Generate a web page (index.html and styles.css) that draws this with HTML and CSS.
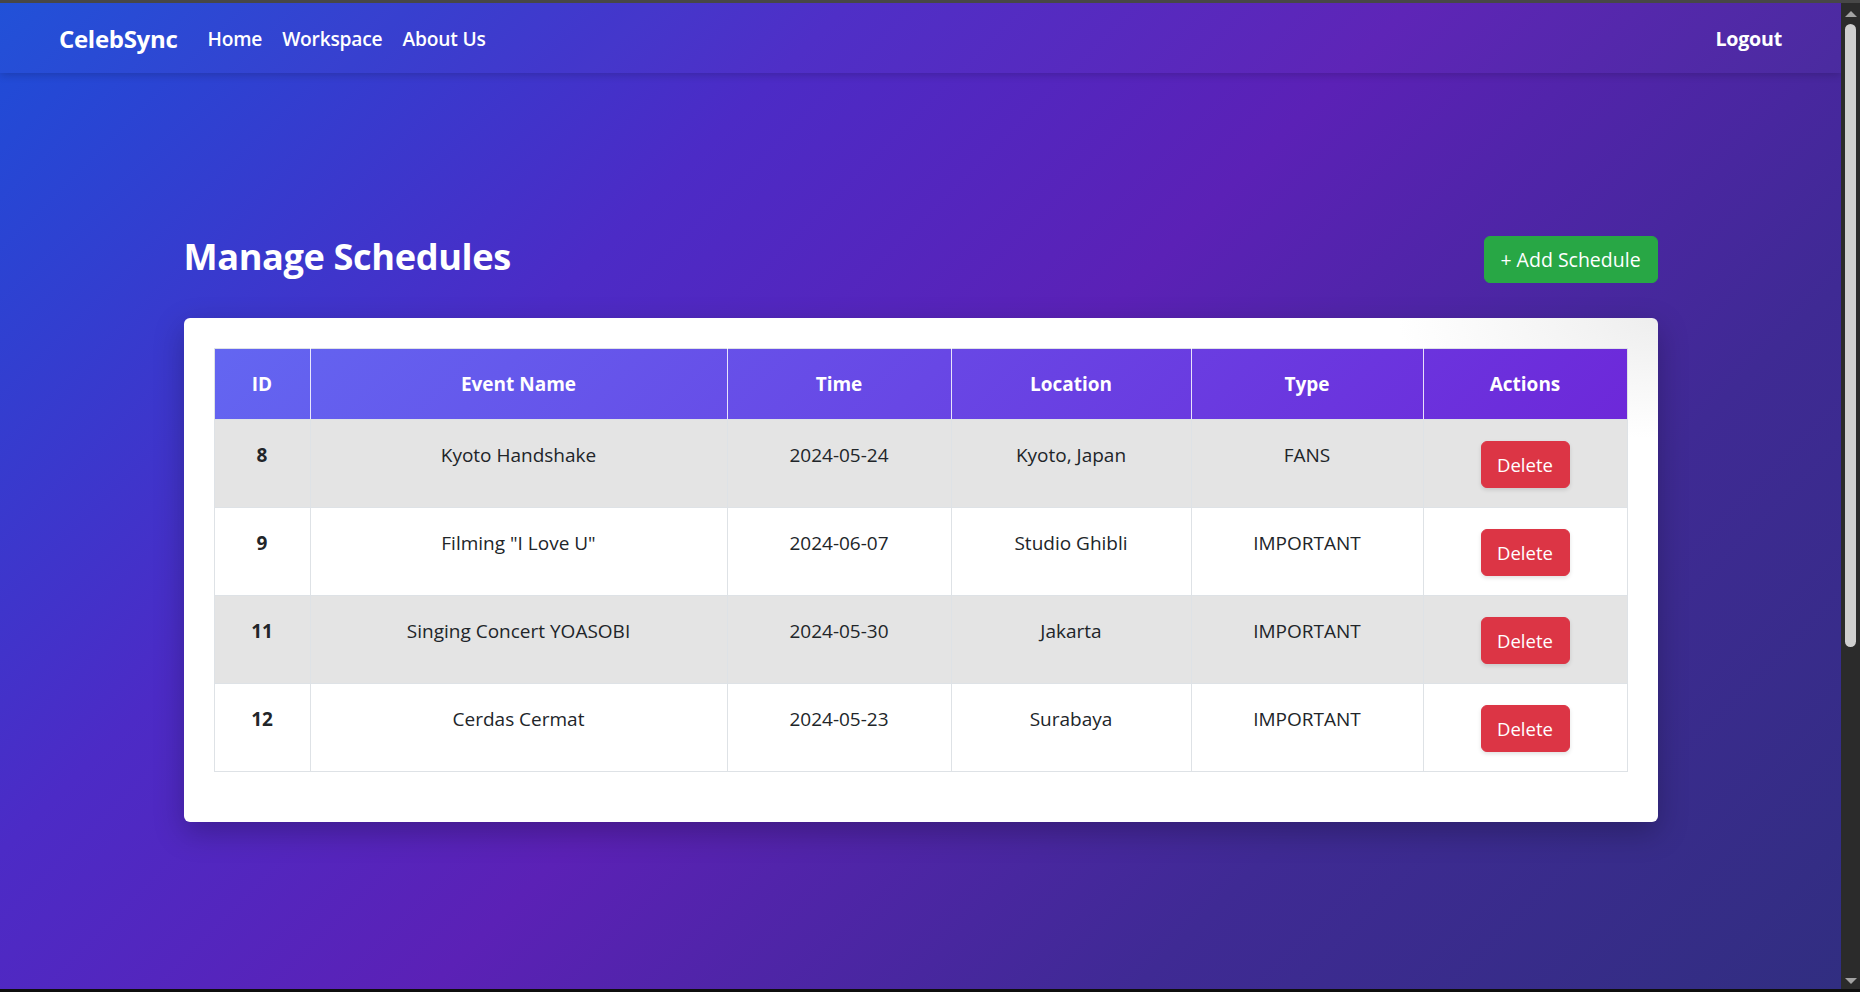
FILE: index.html
```html
<!DOCTYPE html>
<html lang="en">
<head>
<meta charset="utf-8">
<title>CelebSync - Manage Schedules</title>
<link rel="stylesheet" href="styles.css">
</head>
<body>
<div class="frame">
  <div class="page">
    <nav class="navbar">
      <div class="nav-left">
        <a class="brand" href="#">CelebSync</a>
        <a class="nav-link" href="#">Home</a>
        <a class="nav-link" href="#">Workspace</a>
        <a class="nav-link" href="#">About Us</a>
      </div>
      <a class="nav-link logout" href="#">Logout</a>
    </nav>
    <main class="container">
      <div class="page-head">
        <h2 class="title">Manage Schedules</h2>
        <button class="btn btn-add">+ Add Schedule</button>
      </div>
      <div class="card">
        <table class="table">
          <colgroup>
            <col class="c-id"><col class="c-name"><col class="c-time"><col class="c-loc"><col class="c-type"><col class="c-act">
          </colgroup>
          <thead>
            <tr><th>ID</th><th>Event Name</th><th>Time</th><th>Location</th><th>Type</th><th>Actions</th></tr>
          </thead>
          <tbody>
            <tr class="odd"><th>8</th><td>Kyoto Handshake</td><td>2024-05-24</td><td>Kyoto, Japan</td><td>FANS</td><td><button class="btn btn-del">Delete</button></td></tr>
            <tr><th>9</th><td>Filming "I Love U"</td><td>2024-06-07</td><td>Studio Ghibli</td><td>IMPORTANT</td><td><button class="btn btn-del">Delete</button></td></tr>
            <tr class="odd"><th>11</th><td>Singing Concert YOASOBI</td><td>2024-05-30</td><td>Jakarta</td><td>IMPORTANT</td><td><button class="btn btn-del">Delete</button></td></tr>
            <tr><th>12</th><td>Cerdas Cermat</td><td>2024-05-23</td><td>Surabaya</td><td>IMPORTANT</td><td><button class="btn btn-del">Delete</button></td></tr>
          </tbody>
        </table>
      </div>
    </main>
  </div>
  <div class="scrollbar">
    <span class="arrow up"></span>
    <div class="track"><div class="thumb"></div></div>
    <span class="arrow down"></span>
  </div>
</div>
</body>
</html>
```
FILE: styles.css
```css
* { box-sizing: border-box; }
html, body { margin: 0; padding: 0; height: 100%; }
body {
  font-family: "Open Sans", "Noto Sans", "Liberation Sans", sans-serif;
  font-size: 19px;
  color: #212529;
  background: #1a1a1a;
  overflow: hidden;
}
.frame {
  display: flex;
  height: 992px;
  border-top: 3px solid #474747;
  border-bottom: 3px solid #0f0f0f;
}
.page {
  flex: 1;
  overflow: hidden;
  background: linear-gradient(135deg, #1d4ed8 0%, #4c2bc6 30%, #5b21b6 50%, #3f2a94 75%, #312e81 100%);
}
.navbar {
  height: 70px;
  display: flex;
  align-items: center;
  justify-content: space-between;
  padding: 0 49px 0 59px;
  background: rgba(255,255,255,0.02);
  box-shadow: 0 2px 8px rgba(0,0,0,0.18);
}
.nav-left { display: flex; align-items: center; }
.brand {
  color: #fff;
  font-weight: 700;
  font-size: 24px;
  text-decoration: none;
  margin-right: 20px;
  letter-spacing: -0.3px;
}
.nav-link {
  color: #fff;
  text-decoration: none;
  font-weight: 600;
  font-size: 19.2px;
  padding: 0 10px;
  letter-spacing: -0.2px;
}
.logout { font-weight: 700; font-size: 19.6px; }
.container {
  max-width: 1474px;
  margin: 0 auto;
  padding-top: 163px;
}
.page-head {
  display: flex;
  align-items: center;
  justify-content: space-between;
  margin-bottom: 35px;
}
.title {
  margin: 0;
  color: #fff;
  font-size: 36.2px;
  font-weight: 700;
  line-height: 46px;
  letter-spacing: -0.4px;
  position: relative;
  top: -4px;
}
.btn {
  font-family: inherit;
  font-size: 18.5px;
  line-height: 30px;
  color: #fff;
  border: 1px solid transparent;
  border-radius: 6px;
  cursor: pointer;
}
.btn-add {
  background: #28a745;
  border-color: #28a745;
  width: 174px;
  height: 47px;
  padding: 0;
  font-size: 19.5px;
}
.card {
  background: radial-gradient(ellipse 260px 120px at 100% 0%, #eeeeee, #ffffff 100%);
  background-color: #fff;
  border-radius: 6px;
  padding: 30px 30px 50px 30px;
  box-shadow: 0 10px 30px rgba(0,0,0,0.25);
}
.table {
  width: 100%;
  border-collapse: collapse;
  table-layout: fixed;
  background: linear-gradient(135deg, #6366f1, #6d28d9) top left / 100% 71px no-repeat, #fff;
  border: 1px solid #dee2e6;
}
.c-id { width: 96px; }
.c-name { width: 417px; }
.c-time { width: 224px; }
.c-loc { width: 240px; }
.c-type { width: 232px; }
.c-act { width: 204px; }
.table th, .table td {
  text-align: center;
  vertical-align: top;
  padding: 20px 8px 18px;
  line-height: 30px;
  border: 1px solid #dee2e6;
}
.table thead th {
  color: #fff;
  font-weight: 700;
  border-color: rgba(255,255,255,0.85);
  border-top-color: #dee2e6;
  border-bottom-color: #dee2e6;
  height: 71px;
  vertical-align: middle;
  padding: 0 8px;
}
.table thead th:first-child { border-left-color: #dee2e6; }
.table thead th:last-child { border-right-color: #dee2e6; }
.table tbody th { font-weight: 700; }
.table tbody tr { height: 88px; }
.table tbody tr.odd th, .table tbody tr.odd td { background: #e4e4e4; }
.table tbody td:last-child { padding-top: 21px; padding-bottom: 17px; }
.btn-del {
  background: #dc3545;
  border-color: #dc3545;
  width: 89px;
  height: 47px;
  padding: 0;
  box-shadow: 0 2px 4px rgba(0,0,0,0.12);
}
.scrollbar {
  width: 19px;
  background: #2b2b2b;
  display: flex;
  flex-direction: column;
  align-items: center;
}
.arrow { width: 0; height: 0; border-left: 6px solid transparent; border-right: 6px solid transparent; }
.arrow.up { border-bottom: 6px solid #a3a3a3; margin: 8px 0 7px; }
.arrow.down { border-top: 6px solid #a3a3a3; margin: 7px 0 5px; }
.track { flex: 1; width: 100%; display: flex; justify-content: center; }
.thumb { width: 11px; height: 623px; background: #cfcfcf; border-radius: 6px; }
```
